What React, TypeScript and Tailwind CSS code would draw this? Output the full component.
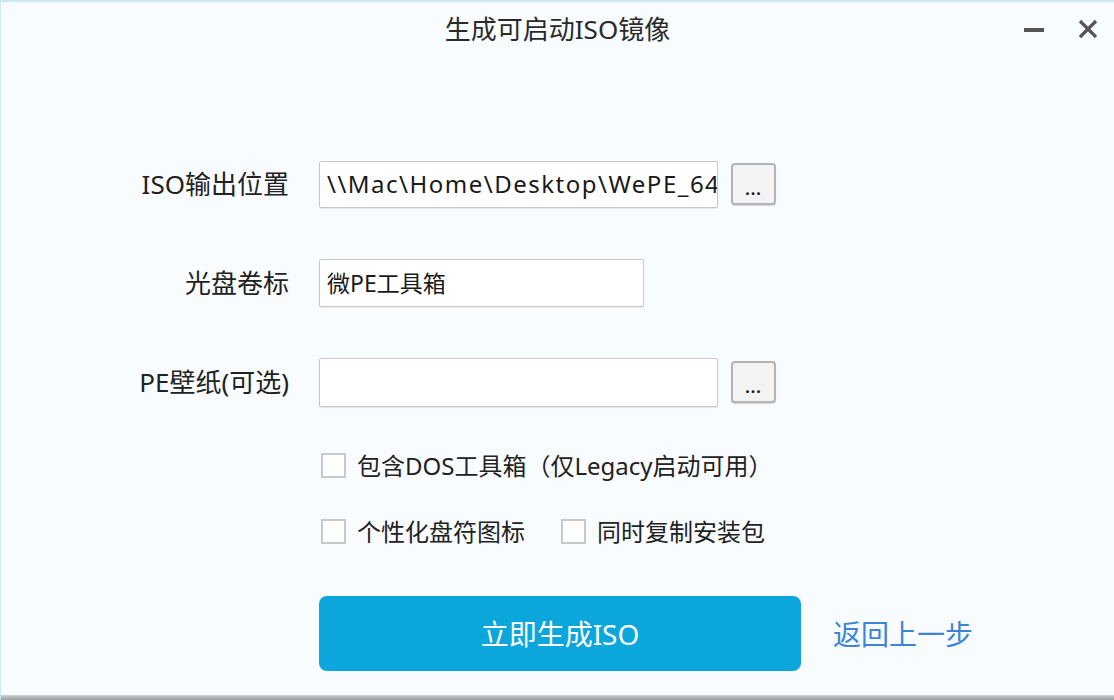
import React from 'react';

const font = { fontFamily: '"Noto Sans", "Noto Sans CJK SC", sans-serif' };

// small "..." browse button next to path inputs
const BrowseButton = () => (
  <button className="ml-[13px] flex h-[42px] w-[45px] items-end justify-center rounded-[4px] border-2 border-[#b4b4b4] bg-[#f3f3f3] pb-[6px] shadow-[0_1px_1px_rgba(0,0,0,0.15)]">
    <span className="text-[16px] leading-none font-bold tracking-[1px] text-[#1a1a1a]">...</span>
  </button>
);

const Checkbox = ({ label }: { label: string }) => (
  <label className="flex items-center">
    <span className="h-[25px] w-[25px] border-2 border-[#c6cacd] bg-white" />
    <span className="ml-[11px] text-[24px] leading-none text-[#222]">{label}</span>
  </label>
);

const Row = ({ label, children }: { label: string; children: React.ReactNode }) => (
  <div className="flex h-[48px] items-center">
    <div className="w-[288px] text-right text-[26px] leading-none text-[#222]">{label}</div>
    <div className="ml-[30px] flex items-center">{children}</div>
  </div>
);

export default function App() {
  return (
    <div
      className="relative flex h-[700px] w-[1114px] flex-col overflow-hidden border-t-2 border-l border-[#cfe6f3] bg-[#f8fcfe]"
      style={font}
    >
      {/* title bar */}
      <div className="relative flex h-[54px] items-center justify-center">
        <span className="text-[26px] leading-none text-[#2a2a2a]">生成可启动ISO镜像</span>
        <div className="absolute right-[16px] top-[17px] flex items-center gap-[34px]">
          <span className="mt-[2px] block h-[4px] w-[20px] bg-[#555]" />
          <svg width="20" height="20" viewBox="0 0 20 20">
            <path d="M2 2 L18 18 M18 2 L2 18" stroke="#555" strokeWidth="3.2" />
          </svg>
        </div>
      </div>

      <div className="flex flex-col pt-[104px]">
        <Row label="ISO输出位置">
          <div className="flex h-[47px] w-[399px] items-center overflow-hidden rounded-[2px] border border-[#c8c8c8] bg-white pl-[7px] shadow-[0_1px_1px_rgba(0,0,0,0.08)]">
            <span className="whitespace-nowrap text-[24px] leading-none tracking-[1.5px] text-[#1a1a1a]">\\Mac\Home\Desktop\WePE_64</span>
          </div>
          <BrowseButton />
        </Row>

        <div className="mt-[51px]">
          <Row label="光盘卷标">
            <div className="flex h-[48px] w-[325px] items-center rounded-[2px] border border-[#c8c8c8] bg-white pl-[7px] shadow-[0_1px_1px_rgba(0,0,0,0.08)]">
              <span className="text-[23px] leading-none text-[#1a1a1a]">微PE工具箱</span>
            </div>
          </Row>
        </div>

        <div className="mt-[51px]">
          <Row label="PE壁纸(可选)">
            <div className="h-[49px] w-[399px] rounded-[2px] border border-[#c8c8c8] bg-white shadow-[0_1px_1px_rgba(0,0,0,0.08)]" />
            <BrowseButton />
          </Row>
        </div>

        <div className="ml-[320px] mt-[47px] flex flex-col gap-[41px]">
          <Checkbox label="包含DOS工具箱（仅Legacy启动可用）" />
          <div className="flex items-center gap-[36px]">
            <Checkbox label="个性化盘符图标" />
            <Checkbox label="同时复制安装包" />
          </div>
        </div>

        <div className="ml-[318px] mt-[52px] flex items-center">
          <button className="h-[75px] w-[482px] rounded-[8px] bg-[#0ba6dc] text-[28px] text-white">
            立即生成ISO
          </button>
          <a className="ml-[32px] text-[28px] text-[#3c84d8]">返回上一步</a>
        </div>
      </div>

      <div className="absolute bottom-0 left-0 h-[5px] w-full bg-gradient-to-b from-[#cfd2d5] to-[#999c9f]" />
    </div>
  );
}
